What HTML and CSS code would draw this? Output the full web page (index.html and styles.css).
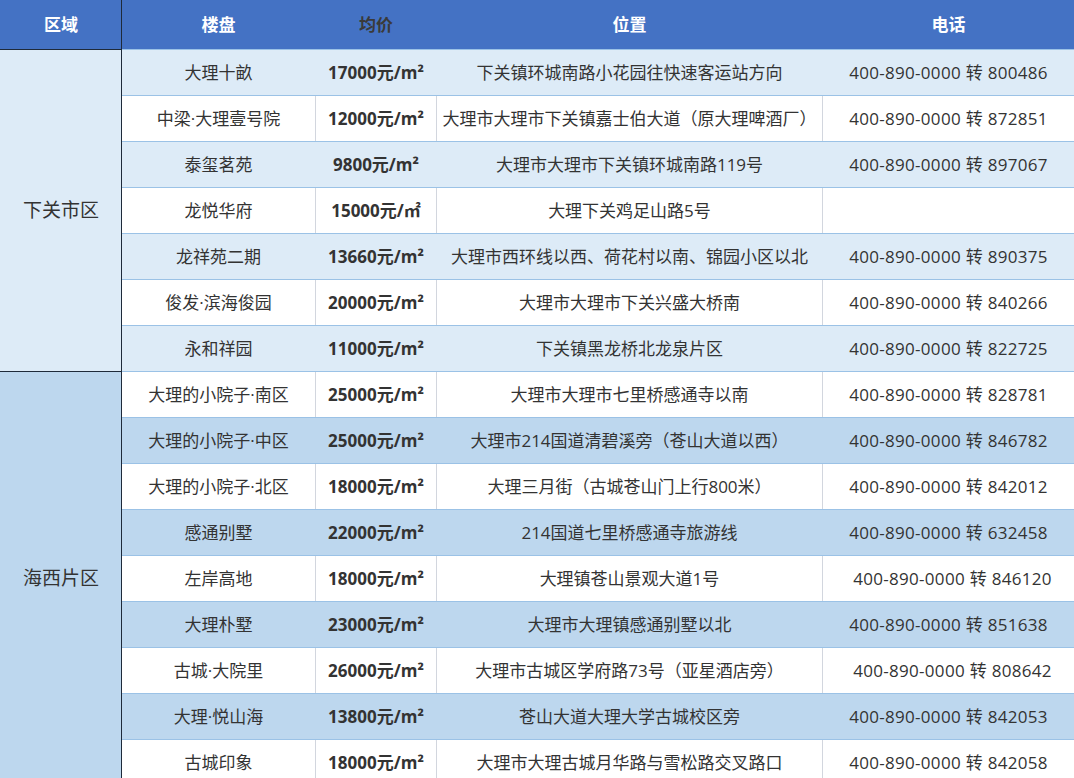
FILE: index.html
```html
<!DOCTYPE html>
<html lang="zh-CN">
<head>
<meta charset="utf-8">
<title>大理楼盘</title>
<link rel="stylesheet" href="styles.css">
</head>
<body>
<table class="grid">
  <colgroup>
    <col class="c-area"><col class="c-name"><col class="c-price"><col class="c-loc"><col class="c-tel">
  </colgroup>
  <thead>
    <tr>
      <th class="area-h">区域</th>
      <th>楼盘</th>
      <th class="dark">均价</th>
      <th>位置</th>
      <th>电话</th>
    </tr>
  </thead>
  <tbody>
    <tr class="a">
      <td class="area area1" rowspan="7">下关市区</td>
      <td>大理十畝</td><td class="price">17000元/m²</td><td>下关镇环城南路小花园往快速客运站方向</td><td class="tel">400-890-0000 转 800486</td>
    </tr>
    <tr class="w"><td>中梁·大理壹号院</td><td class="price">12000元/m²</td><td>大理市大理市下关镇嘉士伯大道（原大理啤酒厂）</td><td class="tel">400-890-0000 转 872851</td></tr>
    <tr class="a"><td>泰玺茗苑</td><td class="price">9800元/m²</td><td>大理市大理市下关镇环城南路119号</td><td class="tel">400-890-0000 转 897067</td></tr>
    <tr class="w"><td>龙悦华府</td><td class="price">15000元/㎡</td><td>大理下关鸡足山路5号</td><td class="tel"></td></tr>
    <tr class="a"><td>龙祥苑二期</td><td class="price">13660元/m²</td><td>大理市西环线以西、荷花村以南、锦园小区以北</td><td class="tel">400-890-0000 转 890375</td></tr>
    <tr class="w"><td>俊发·滨海俊园</td><td class="price">20000元/m²</td><td>大理市大理市下关兴盛大桥南</td><td class="tel">400-890-0000 转 840266</td></tr>
    <tr class="a"><td>永和祥园</td><td class="price">11000元/m²</td><td>下关镇黑龙桥北龙泉片区</td><td class="tel">400-890-0000 转 822725</td></tr>

    <tr class="w">
      <td class="area area2" rowspan="9">海西片区</td>
      <td>大理的小院子·南区</td><td class="price">25000元/m²</td><td>大理市大理市七里桥感通寺以南</td><td class="tel">400-890-0000 转 828781</td>
    </tr>
    <tr class="b"><td>大理的小院子·中区</td><td class="price">25000元/m²</td><td>大理市214国道清碧溪旁（苍山大道以西）</td><td class="tel">400-890-0000 转 846782</td></tr>
    <tr class="w"><td>大理的小院子·北区</td><td class="price">18000元/m²</td><td>大理三月街（古城苍山门上行800米）</td><td class="tel">400-890-0000 转 842012</td></tr>
    <tr class="b"><td>感通别墅</td><td class="price">22000元/m²</td><td>214国道七里桥感通寺旅游线</td><td class="tel">400-890-0000 转 632458</td></tr>
    <tr class="w"><td>左岸高地</td><td class="price">18000元/m²</td><td>大理镇苍山景观大道1号</td><td class="tel shift">400-890-0000 转 846120</td></tr>
    <tr class="b"><td>大理朴墅</td><td class="price">23000元/m²</td><td>大理市大理镇感通别墅以北</td><td class="tel">400-890-0000 转 851638</td></tr>
    <tr class="w"><td>古城·大院里</td><td class="price">26000元/m²</td><td>大理市古城区学府路73号（亚星酒店旁）</td><td class="tel shift">400-890-0000 转 808642</td></tr>
    <tr class="b"><td>大理·悦山海</td><td class="price">13800元/m²</td><td>苍山大道大理大学古城校区旁</td><td class="tel">400-890-0000 转 842053</td></tr>
    <tr class="w"><td>古城印象</td><td class="price">18000元/m²</td><td>大理市大理古城月华路与雪松路交叉路口</td><td class="tel">400-890-0000 转 842058</td></tr>
  </tbody>
</table>
</body>
</html>
```

FILE: styles.css
```css
html, body {
  margin: 0;
  padding: 0;
  background: #ffffff;
}

body {
  font-family: "Open Sans", "Noto Sans CJK SC", sans-serif;
  color: #333333;
  font-size: 17px;
}

.grid {
  width: 1074px;
  border-collapse: collapse;
  table-layout: fixed;
}

.c-area { width: 121px; }
.c-name { width: 194px; }
.c-price { width: 121px; }
.c-loc { width: 386px; }
.c-tel { width: 252px; }

.grid th {
  box-sizing: border-box;
  height: 49px;
  padding: 0 0 3px;
  background: #4472c4;
  color: #ffffff;
  font-weight: bold;
  font-size: 17px;
  text-align: center;
  vertical-align: middle;
  border: 1px solid #4472c4;
  border-bottom: 1px solid #9bc2e6;
}

.grid th.dark {
  color: #3a3a3a;
}

.grid th.area-h {
  border-right: 1px solid #1e2a3a;
  border-bottom: 1px solid #1e2a3a;
}

.grid td {
  box-sizing: border-box;
  height: 46px;
  padding: 0 0 3px;
  text-align: center;
  vertical-align: middle;
  white-space: nowrap;
  border-bottom: 1px solid #9bc2e6;
  border-left: 1px solid transparent;
  border-right: 1px solid transparent;
}

.grid tr.w td {
  background: #ffffff;
  border-left-color: #d2d6de;
  border-right-color: #d2d6de;
}

.grid tr.a td {
  background: #ddebf7;
  border-left-color: #ddebf7;
  border-right-color: #ddebf7;
}

.grid tr.b td {
  background: #bdd7ee;
  border-left-color: #bdd7ee;
  border-right-color: #bdd7ee;
}

.grid td.price {
  font-weight: bold;
}

.grid td.tel {
  letter-spacing: 0.3px;
}

.grid td.shift {
  padding-left: 8px;
}

.grid td.area {
  font-size: 19px;
  border-right: 1px solid #1e2a3a;
  border-left: 1px solid transparent;
  border-bottom: 1px solid #1e2a3a;
}

.grid tr td.area1 {
  background: #ddebf7;
  border-left-color: #ddebf7;
  border-right-color: #1e2a3a;
}

.grid tr td.area2 {
  background: #bdd7ee;
  border-left-color: #bdd7ee;
  border-right-color: #1e2a3a;
}
```
